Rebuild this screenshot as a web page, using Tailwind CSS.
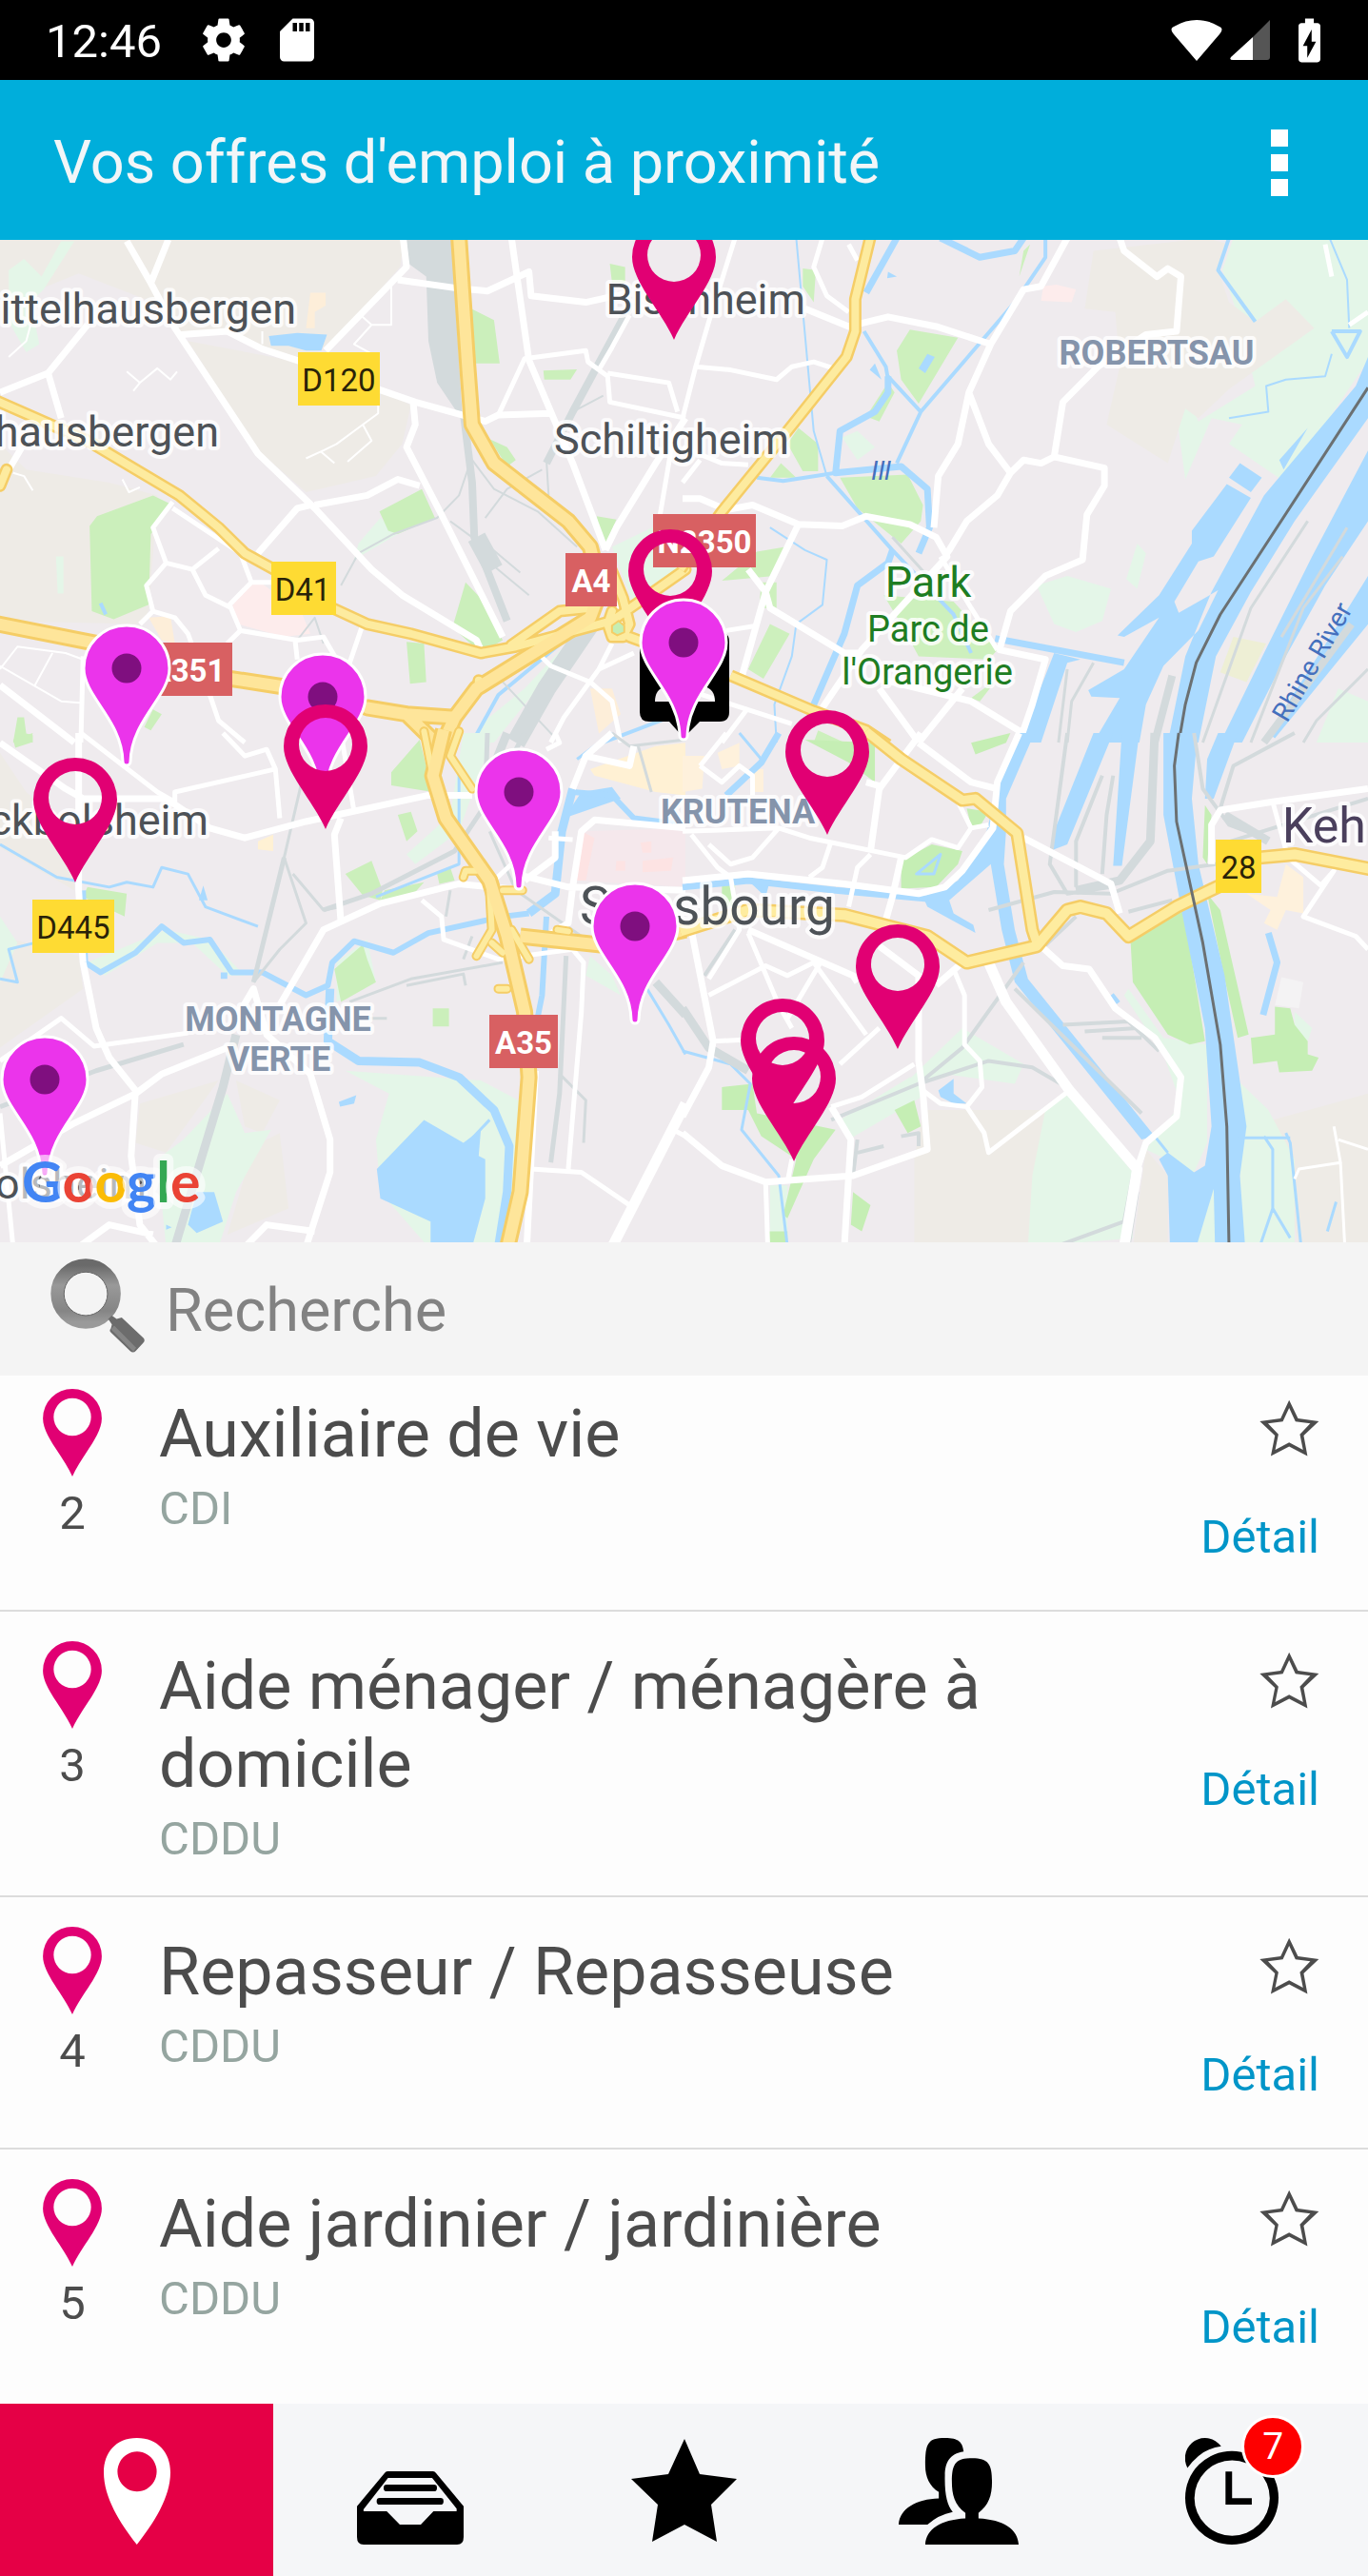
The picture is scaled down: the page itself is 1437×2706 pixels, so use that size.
<!DOCTYPE html>
<html lang="fr">
<head>
<meta charset="utf-8">
<meta name="viewport" content="width=device-width, initial-scale=1">
<title>Vos offres d'emploi à proximité</title>
<script src="https://cdn.jsdelivr.net/npm/@tailwindcss/browser@4"></script>
</head>
<body class="flex min-h-screen flex-col bg-[#fdfdfd] font-['Roboto',sans-serif] text-[#4c4c4c]">

<svg class="hidden" aria-hidden="true">
  <symbol id="pin" viewBox="-44 -131 88 131" overflow="visible">
    <path fill="#e10073" fill-rule="evenodd" d="M0 0C-13 -30 -44 -61 -44 -87A44 44 0 0 1 44 -87C44 -61 13 -30 0 0ZM0 -117A28 28 0 1 0 0 -61A28 28 0 1 0 0 -117Z"/>
  </symbol>
  <symbol id="star" viewBox="558 88 190 180">
    <path fill="#4c4c4c" fill-rule="evenodd" d="M652 90L680 148L746 157L698 202L710 267L652 237L594 267L607 202L559 157L625 148ZM652 115L632 158L585 164L618 198L608 247L652 224L696 247L686 198L719 164L672 158Z"/>
  </symbol>
</svg>

<div class="flex h-[84px] shrink-0 items-center justify-between bg-black pl-[48px] pr-[34px] text-white">
  <div class="flex items-center">
    <span class="pt-[2px] text-[49px] leading-[57px]">12:46</span>
    <svg class="ml-[38px] size-[54px]" viewBox="0 0 24 24" fill="currentColor"><path d="M19.43 12.98c.04-.32.07-.64.07-.98s-.03-.66-.07-.98l2.11-1.65c.19-.15.24-.42.12-.64l-2-3.46c-.12-.22-.39-.3-.61-.22l-2.49 1c-.52-.4-1.08-.73-1.69-.98l-.38-2.65C14.46 2.18 14.25 2 14 2h-4c-.25 0-.46.18-.49.42l-.38 2.65c-.61.25-1.17.59-1.69.98l-2.49-1c-.23-.09-.49 0-.61.22l-2 3.46c-.13.22-.07.49.12.64l2.11 1.65c-.04.32-.07.65-.07.98s.03.66.07.98l-2.11 1.65c-.19.15-.24.42-.12.64l2 3.46c.12.22.39.3.61.22l2.49-1c.52.4 1.08.73 1.69.98l.38 2.65c.03.24.24.42.49.42h4c.25 0 .46-.18.49-.42l.38-2.65c.61-.25 1.17-.59 1.69-.98l2.49 1c.23.09.49 0 .61-.22l2-3.46c.12-.22.07-.49-.12-.64l-2.11-1.65zM12 15.5c-1.93 0-3.5-1.57-3.5-3.5s1.57-3.5 3.5-3.5 3.5 1.57 3.5 3.5-1.57 3.5-3.5 3.5z"/></svg>
    <svg class="ml-[23px] size-[54px]" viewBox="0 0 24 24" fill="currentColor"><path d="M18 2h-8L4.02 8 4 20c0 1.100.9 2 2 2h12c1.100 0 2-.9 2-2V4c0-1.100-.9-2-2-2zm-6 6h-2V4h2v4zm3 0h-2V4h2v4zm3 0h-2V4h2v4z"/></svg>
  </div>
  <div class="flex items-center">
    <svg class="h-[43px] w-[54px]" viewBox="0 0 54 43" fill="currentColor"><path d="M27 43L3 15C-1 10 0 8 5 6C18 -2 36 -2 49 6C54 8 55 10 51 15Z"/></svg>
    <svg class="ml-[8px] h-[42px] w-[42px]" viewBox="0 0 42 42"><path fill="#555" d="M24 18L42 0V39Q42 42 39 42H24Z"/><path fill="#fff" d="M24 18V42H3Q-1 42 1 39Z"/></svg>
    <svg class="ml-[14px] size-[55px]" viewBox="0 0 24 24" fill="currentColor"><path d="M15.670 4H14V2h-4v2H8.330C7.600 4 7 4.600 7 5.330v15.330C7 21.400 7.600 22 8.330 22h7.330c.74 0 1.340-.6 1.340-1.330V5.330C17 4.600 16.400 4 15.670 4zM11 20v-5.500H9L13 7v5.500h2L11 20z"/></svg>
  </div>
</div>

<header class="flex h-[168px] shrink-0 items-center justify-between bg-[#00aedb] pl-[56px] pr-[84px]">
  <h1 class="pt-[5px] text-[63px] leading-[74px] text-[#f2f6f8]">Vos offres d'emploi à proximité</h1>
  <button type="button" aria-label="Plus d'options" class="flex flex-col gap-[8px] pt-[5px]">
    <span class="size-[18px] bg-white"></span><span class="size-[18px] bg-white"></span><span class="size-[18px] bg-white"></span>
  </button>
</header>

<section aria-label="Carte des offres">
<svg class="block h-auto w-full bg-[#efebee]" viewBox="0 252 1437 1053" fill="none" stroke-linejoin="round">

  <!-- north-west -->
  <g transform="translate(0 250) scale(.4592 .338)" class="[&_path]:[vector-effect:non-scaling-stroke]">
    <path fill="#eeebe6" d="M0 0H925L915 90L780 300L700 380L600 340L520 290L400 290L350 200L180 110L90 160L0 260ZM430 320L700 390L870 470L940 520L920 640L860 740L700 790L590 660ZM0 640L60 720L250 760L360 800L340 1160L320 1200L0 1190Z"/>
    <path fill="#e4f6e8" d="M20 100L55 65L95 120L140 10H170L100 160L70 200L90 330L60 355L20 260ZM820 950L870 870L910 920L810 1000ZM128 990H145V1105H132ZM1400 960L1568 850V1020L1450 1140ZM1290 1270L1200 1400L1110 1500L1080 1568H1130L1230 1400Z"/>
    <path fill="#cbefbb" d="M350 800L395 830L345 920L340 1140L260 1185L210 1160L205 895L222 865ZM965 780L995 870L910 920L888 910L868 850ZM1078 220L1130 255L1143 390L1082 390ZM1243 412L1320 408L1305 440H1245ZM1120 625L1160 650L1180 690L1160 710ZM1065 1070L1100 1120L1150 1250L1100 1290L1035 1210ZM930 1255L970 1260L975 1380L938 1385ZM1365 865L1410 875L1380 970ZM350 1465L370 1480L345 1530L330 1520ZM1395 80L1430 90V140H1400ZM40 1490H55L60 1540L75 1545V1568H30Z"/>
    <path fill="#fdecec" d="M560 1080L600 1075L690 1165L710 1230L650 1240L545 1200L528 1150Z"/>
    <path fill="#fdeed9" d="M710 170H745V210L720 230V280H700ZM340 1180L390 1175L400 1260L370 1250ZM1350 1400L1400 1400L1420 1480L1370 1540Z"/>
    <path fill="#aadaff" d="M615 305L680 295L748 300L735 350L700 350L660 335L620 335Z"/>
    <path stroke="#aadaff" stroke-width="4" d="M1568 1470L1380 1568M1300 1240L1140 1420L1080 1568M230 1135L242 1170"/>
    <path fill="#d3dadc" d="M930 5L1035 5L1040 160L1058 560L1040 530L1000 450L980 320L975 120L935 80Z"/>
    <path stroke="#d3dadc" stroke-width="8" d="M1060 540L1080 760L1085 930L1160 1190M1445 200L1310 540L1250 700"/>
    <path stroke="#d3dadc" stroke-width="20" d="M1090 930L1130 1030M1350 1200L1250 1400L1180 1568"/>
    <path stroke="#d3dadc" stroke-width="2" d="M1075 700L1050 800L1000 870L900 920L820 980L780 1080M1250 690L1255 800M1240 720L1160 780L1110 870M1080 690L1130 780L1230 850L1320 960M1030 880L1080 930M1120 960L1190 1040M1130 1020L1210 1110M680 1250L720 1180L740 1260M1150 1380L1280 1568M1310 540L1380 490"/>
    <path stroke="#fff" stroke-width="2" d="M290 415L320 450L360 405L390 440L405 415M320 450L305 475M865 520V545L830 580L770 640L740 660L700 685M830 580L850 630L795 695M735 665L765 700M600 290V330M850 270L810 330L850 360M895 130V270H850L825 240M20 370L60 320L70 270M30 730L55 740L75 785M280 750L295 790L320 775M0 1340L40 1270L150 1290L190 1310M0 1330L140 1440L190 1445M120 1290L80 1390"/>
    <path stroke="#fff" stroke-width="5" d="M395 820L350 900L380 1010L335 1080L350 1160L400 1180L430 1230L480 1420L500 1500L560 1568M395 840L550 980L575 1070L525 1140L550 1220L680 1250L740 1240L770 1310L800 1320L830 1200M500 965L440 1030L380 1010M440 1030L470 1110L530 1150M575 1070H630M675 1250L680 1310M550 1220L520 1260M350 1160L320 1200M185 1568L190 1300M1230 1290L1260 1330L1350 1380L1400 1440L1420 1568M1400 1260L1370 1340L1290 1490L1260 1568M1370 1340L1450 1290M1140 550L1200 375L1340 350L1345 385L1390 430L1395 510L1568 560M1390 420L1530 450L1550 540M1440 240L1400 340L1370 410M1540 620L1510 860"/>
    <path stroke="#fff" stroke-width="7" d="M290 10L345 140L400 280L590 670L720 840L850 1030L920 1110L1090 1250L1100 1280M385 5L345 140M922 0L930 90L745 350M415 300L520 290L600 345L690 385M865 470L950 510L1110 570L1140 550L1260 545M910 130L1040 155M1075 160L1115 165L1210 105L1215 180L1340 200L1440 170M1170 0L1210 380L1310 700L1385 970M200 270L110 420L0 480M110 420L140 560M945 510L950 580L930 650L1010 860L1080 1050L1150 1240M720 830L840 800L910 750L960 770M710 830L680 840L590 980M0 1390L170 1568M1568 560L1500 700L1410 900L1385 970M50 650L20 720M1405 1120L1430 1240"/>
    <path id="nw-small" stroke-linecap="round" d="M-10 505L200 630L410 800L500 900L560 980L640 1040M760 1150L840 1200L940 1230L1100 1290L1180 1270L1400 1190L1568 1030M1350 1150L1280 1160L1170 1265M1395 1020L1425 1120L1440 1200L1425 1240L1400 1240L1390 1200L1400 1160M0 770L15 720M1440 1240L1500 1270M1095 1375V1400"/>
    <path id="nw-big" stroke-linecap="round" d="M-10 1198L220 1260M530 1370L650 1395M840 1460L930 1480M1050 0L1070 400L1080 580L1130 700L1300 880L1350 960L1375 1090L1350 1180L1220 1290L1090 1400L1040 1490L1010 1580M930 1480L990 1560M930 1480L1040 1490"/>
    <use href="#nw-small" stroke="#f5cd66" stroke-width="13"/><use href="#nw-big" stroke="#f5cd66" stroke-width="18"/>
    <use href="#nw-small" stroke="#fdeb9f" stroke-width="8"/><use href="#nw-big" stroke="#fee59a" stroke-width="12"/>
    <path fill="#c5eeb4" stroke="#f5cd66" stroke-width="2" d="M1400 1205L1415 1190L1428 1205V1225L1412 1235L1400 1225Z"/>
  </g>

  <!-- north-east -->
  <g transform="translate(717 250) scale(.4592 .338)" class="[&_path]:[vector-effect:non-scaling-stroke]">
    <path fill="#e4f6e8" d="M1260 0H1568V380L1380 760L1250 640L1280 580L1210 560L1150 750L1130 550L1160 510L1180 570L1310 460L1270 240L1235 100ZM810 1080L880 1050L980 1090L960 1190L900 1225L850 1200ZM1040 950L1060 980L1040 1090L1015 1060ZM365 620L400 600L440 650L400 690ZM1500 1400L1568 1440V1568H1450Z"/>
    <path fill="#eeebe6" d="M940 40L1200 0L1250 20L1225 100L1250 200L1310 260L1380 190L1445 280L1250 470L1180 560L1150 530L1110 700L970 580L1000 400L990 230L920 220Z"/>
    <path fill="#eeefd5" d="M1260 1240L1335 1260L1290 1380L1230 1350Z"/>
    <path fill="#cdf0bd" d="M520 285L630 310L540 515L500 440L490 350ZM360 745L515 735L550 830L545 880L500 950L400 840ZM265 590L310 640L310 725L275 725L240 640ZM275 95L305 100L300 200L275 150ZM170 975L235 960L210 1050L90 1065ZM460 1110L620 1130L720 1280L700 1310L540 1300L500 1200ZM200 1200L245 1230L185 1370L150 1340ZM470 450L485 480L450 570L420 555ZM225 700L260 745L200 745ZM180 1070H215V1150H175ZM310 1530L370 1568H300ZM660 1430L720 1370L680 1440ZM780 40L795 20L770 120Z"/>
    <path fill="#fdecec" d="M825 150L855 145L900 160L890 200L820 195Z"/>
    <path fill="#aadaff" d="M1568 370L1540 460L1330 800L1210 1100L1150 1300L1110 1568H1180L1220 1300L1300 1100L1400 880L1568 560ZM1568 660L1440 990L1330 1290L1230 1568H1280L1380 1300L1470 1080L1568 880ZM1568 1050L1500 1200L1340 1540L1355 1555L1568 1200ZM1245 765L1300 808L1215 990L1180 1005L1125 1130L1135 1165L1225 1095L1180 1220L1100 1330L1060 1450L1045 1568H940L1000 1430L935 1425L928 1405L1010 1340L1090 1180L1010 1240L995 1235L1090 1110L1165 950L1165 910ZM1275 700L1325 745L1300 790L1250 745ZM850 1290L910 1310L880 1320L820 1568H770ZM1430 590L1375 720L1365 690ZM440 390L455 440L428 410ZM470 105L490 120L468 125ZM560 360L577 370L555 420L540 405Z"/>
    <path stroke="#aadaff" stroke-width="2" d="M260 0L300 600L330 740M1480 0L1520 130L1525 280M1250 560L1340 540L1335 460L1380 440L1470 430L1485 360M200 900L280 970L330 1000L320 1140L260 1200L250 1300L210 1450L215 1568"/>
    <path stroke="#aadaff" stroke-width="4" d="M330 740L480 970L620 1170L660 1290M170 745L230 755L350 730M830 0V60L760 200L545 540L490 700M545 540L470 430M1250 0L1225 100L1310 260M1485 290L1520 370L1550 290L1485 290M415 290L465 400L470 440"/>
    <path stroke="#aadaff" stroke-width="7" d="M490 0L420 170M470 430L470 480L440 540L360 600L350 730L500 710L560 780L565 900L540 980M480 970L470 1010L400 1080L370 1230L300 1450M590 0L680 60L760 40L780 0M715 1245L1010 1320"/>
    <path stroke="#d3dadc" stroke-width="3" d="M880 1340L860 1568M940 1320L890 1440L880 1568M1430 880L1300 1150L1190 1568M1510 990L1420 1150L1300 1568M1568 1340L1450 1500L1420 1568M1520 900L1370 1240M480 930L560 1050"/>
    <path stroke="#d3dadc" stroke-width="8" d="M1120 1360L1080 1568M1530 1200L1330 1568"/>
    <path stroke="#fff" stroke-width="5" d="M120 0L60 260L30 400L0 560M320 0L300 90L330 180L380 230M400 70L380 20M30 400L110 410L215 440L250 400L300 385L345 405M0 650L90 700L150 705M100 1220L170 1205M590 990L660 1150L720 1280M0 1400L250 1510M150 1460L90 1568M40 690L0 760M1525 270L1568 230M1470 20L1485 120"/>
    <path stroke="#fff" stroke-width="7" d="M280 220L380 275L470 245L580 275L705 330M880 0L820 150L780 160L705 330L655 480L630 640L585 740L575 900M655 480L700 640L750 730M1000 0L1010 40L1085 120L1110 95L1140 120L1130 290L1060 300L950 400L870 510L850 680L820 700L780 690L750 730L720 800L650 880L610 970L600 990M850 680L965 715L965 770L925 860L915 1000L830 1050L750 1160L725 1280L830 1310L800 1450L770 1568M0 810L40 810L100 845L160 830L265 890L365 895L420 865L520 890L580 930L605 990L410 1280L320 1460M265 890L190 1100L200 1150L370 1290L410 1290M190 1100L130 1390M150 1030L190 1100M450 1400L540 1568M450 1370L660 1440L780 1540M640 1400L540 1568"/>
    <path id="ne-small" d="M430 -5L395 190V290L375 370L240 600L90 850L-5 1030M110 1360L300 1470L420 1530L470 1575"/>
    <use href="#ne-small" stroke="#f5cd66" stroke-width="13"/><use href="#ne-small" stroke="#fdeb9f" stroke-width="8"/>
    <path stroke="#6b7072" stroke-width="3" d="M1568 465L1230 1170L1175 1320L1150 1450L1135 1568"/>
  </g>

  <!-- south-west -->
  <g transform="translate(0 770) scale(.4592 .3444)" class="[&_path]:[vector-effect:non-scaling-stroke]">
    <path fill="#eeebe6" d="M0 60L60 180L170 300V480L0 350ZM0 620L180 680L190 780L0 960ZM320 1130L500 1060L380 1280L310 1250ZM540 1060L640 1120L600 1220L560 1200ZM580 1260L640 1220L660 1450L520 1530Z"/>
    <path fill="#e4f6e8" d="M1060 0H1130L1050 300L950 400L930 370L1030 250ZM790 1030L1100 1060L1200 1130L1180 1568H980L870 1400L860 1240L890 1100ZM420 1240L520 1100L560 1220L620 1210L540 1400L500 1568H380L360 1300ZM380 600L480 630L560 740L520 740L440 640L360 640L240 740L200 700ZM0 560L40 640L0 760ZM770 700L840 630L860 760L770 820ZM1350 680L1400 740L1420 800L1340 740Z"/>
    <path fill="#cbefbb" d="M895 120L960 20L990 180L895 160ZM790 430L850 390L875 480L870 510L830 495ZM765 720L830 645L840 690L860 760L780 820ZM200 470L290 490L285 560L190 500ZM990 840H1027V895H990ZM1000 430L1030 410L1040 450L1005 460ZM30 20L75 0L70 30L35 45ZM910 250L940 240L955 300L930 330ZM880 480L970 455L940 500L870 510Z"/>
    <path fill="#fff1d4" d="M1350 110L1500 40L1568 30V190L1500 180L1360 130ZM590 330L625 310V360L590 355Z"/>
    <path fill="#f5e8ec" d="M1330 300L1568 290V470L1320 450Z"/>
    <path fill="#fde3e3" d="M1330 300L1360 320L1340 450H1310ZM1470 390L1540 380L1535 420L1470 425ZM1410 390H1430V420H1408ZM1465 335L1490 330V365H1470Z"/>
    <path fill="#aadaff" d="M970 1180L1060 1250L1100 1210L1095 1290L1110 1300V1420L1080 1568H985L985 1490L870 1420L862 1330L905 1270ZM450 1400L490 1400L510 1490L450 1525L430 1500ZM775 1125L815 1105L810 1130L778 1140ZM465 465L475 510L455 510ZM505 730H520V750H505ZM380 1500L393 1508L380 1515ZM1330 180L1400 165L1420 200L1290 260Z"/>
    <path stroke="#aadaff" stroke-width="3" d="M0 340L130 440L250 470L290 455L350 470L370 410L430 430L470 530L590 590M1120 1180L1070 1250M1480 780L1530 890L1568 980M0 750L40 760L20 660L80 640M1210 830L1215 1000M860 500L1050 400V120M1400 0L1320 80"/>
    <path stroke="#aadaff" stroke-width="6" d="M190 480L195 700L230 730L310 670L370 590L420 640L480 630L530 730L600 730L700 800L750 770L760 700L810 635L900 670L980 610L1150 560L1210 550M1250 560L1240 800L1210 1000M1310 180L1400 190L1450 260L1568 280"/>
    <path stroke="#aadaff" stroke-width="9" d="M1210 550L1270 490L1285 300L1310 170M755 780L750 940L820 1000L960 1005L1050 1050L1130 1150L1165 1260L1160 1400L1140 1568"/>
    <path stroke="#d3dadc" stroke-width="3" d="M690 150L650 380L700 580L640 660L580 760M800 820L940 750L1150 700M930 770L1060 735L1065 770M1280 1040L1340 1120L1335 1250M1120 300L1180 480L1330 620M670 430L740 540L780 530M1060 690L1080 620M1020 560L1030 480M820 870H885M1400 0L1440 40L1568 20M1460 40L1490 180"/>
    <path stroke="#d3dadc" stroke-width="5" d="M650 380L580 760M1200 0L1130 180L1040 360L850 490L740 540M0 1140L220 1030L420 950M1295 680L1280 1100L1260 1310M1115 0L1110 200"/>
    <path stroke="#d3dadc" stroke-width="9" d="M540 920L510 1080L460 1300L400 1568M1500 760L1568 860M1160 0L1130 100"/>
    <path stroke="#fff" stroke-width="5" d="M185 0L360 180L400 210L400 180L630 110L610 50L560 70L510 0M630 110L640 260M780 0L810 240M965 510L1010 560L1015 630L1140 690L1310 660L1335 700L1330 850L1300 1330M0 1000L140 870L215 955L430 915M0 1160L30 1568M1215 1330L1330 1340L1440 1440M1540 1210L1568 1230M1250 50L1280 30L1270 0M1130 450L1170 400M1255 320L1310 325"/>
    <path stroke="#fff" stroke-width="7" d="M0 30L150 170L190 200L380 200L480 290L560 320L700 270L980 190L1080 190M180 0V480L190 700L220 900L250 990L310 1090L300 1290L320 1500L360 1568M780 260L765 310L780 580M1200 480L1050 460L870 520L740 600L640 830M540 870L580 780L610 920L710 1040L755 1240V1340L700 1568M0 1320L170 1190L310 1100L370 1040L520 960M180 1568L250 1500L350 1530M560 1568L610 1500L720 1520M1225 1030L1205 1568M1180 430L1300 470L1568 480M1270 300V380L1200 450M1568 290L1360 265L1330 300L1310 470L1300 580L1250 620M1310 170L1340 70L1400 0M1340 70L1440 100L1450 40"/>
    <path stroke="#fff" stroke-width="11" d="M1568 1130L1400 1568"/>
    <path id="sw-small" stroke-linecap="round" d="M970 -5L990 130M1050 -5L1030 70L1080 170M1120 480L1125 600L1090 680M1150 480H1195M1170 600L1210 690M1125 640L1150 670M1090 420H1065L1060 440M1160 780H1140M1275 600L1300 605"/>
    <path id="sw-big" d="M1015 -10L990 130L1020 260L1120 450L1160 620L1200 850L1210 1050L1190 1400L1160 1575M1190 620L1400 650L1568 600"/>
    <use href="#sw-small" stroke="#f5cd66" stroke-width="10"/><use href="#sw-big" stroke="#f5cd66" stroke-width="18"/>
    <use href="#sw-small" stroke="#fdeb9f" stroke-width="6"/><use href="#sw-big" stroke="#fee59a" stroke-width="12"/>
  </g>

  <!-- south-east -->
  <g transform="translate(717 770) scale(.4592 .3444)" class="[&_path]:[vector-effect:non-scaling-stroke]">
    <path fill="#eeebe6" d="M550 1150H830L850 1250L800 1400L790 1568H530V1300ZM1350 1180L1568 1100V1568H1410ZM1060 1270L1110 1350V1568H1030Z"/>
    <path fill="#e4f6e8" d="M1020 780L1100 930L1200 950L1200 1250L1170 1340L1060 1270L1140 1130L1100 980L1010 800ZM830 1150L880 1100L1030 1340V1540L790 1568L800 1350ZM1270 1060L1340 1150L1400 1300V1568H1280ZM500 1080L640 900L780 1010L760 1070L600 1040ZM360 1180L520 1050L560 1100L380 1240ZM200 1380H240V1568H200ZM1400 850L1440 900L1430 940L1400 900Z"/>
    <path fill="#c5eeb4" d="M1025 640L1145 530L1195 940L1160 950L1110 920L1030 760ZM1200 490L1230 540L1295 920L1270 930L1240 750ZM500 390L570 340L640 360L630 400L580 470L500 475ZM1355 835L1390 840L1400 890L1430 940L1430 980L1455 990L1440 1030L1365 1035L1360 1000L1305 1010L1300 930L1355 920ZM90 1080L160 1070L170 1160L350 1210L300 1300L240 1480L230 1470L260 1300L180 1230L150 1150L90 1150ZM650 230L700 240L680 285H660ZM485 1150L530 1120L545 1200L515 1220ZM280 20L440 30V150L380 90ZM90 450H120V530H90ZM660 30L750 0L740 30L670 65ZM390 1400L430 1440L410 1520L385 1500ZM195 1520H240V1568H195ZM1195 220L1210 250L1200 400L1190 380Z"/>
    <path fill="#fef1dc" d="M1380 400L1420 440V550L1380 540L1360 600L1330 580L1345 540L1290 490L1360 500ZM0 70L50 70L45 170L0 180ZM80 60L130 30L130 100L90 110ZM160 110H185V180H165Z"/>
    <path fill="#f4f3f4" d="M1370 745L1420 760L1410 840L1355 830Z"/>
    <path fill="#aadaff" d="M1100 0H1178L1165 200L1180 400L1240 740L1290 1200L1275 1350L1287 1568H1115L1110 1350L1090 1300L1110 1280L1170 1340L1195 1320L1210 1200L1195 900L1150 600L1100 250ZM805 0L740 200V300L735 400L760 600L790 750L1080 1230L1050 1240L760 760L730 600L705 400L610 510L620 550L665 585L670 610L560 530L550 500L630 450L690 330L720 170L770 0ZM940 0H985L880 340L840 360L850 300ZM1005 0H1045L1005 405H985ZM1225 0H1270L1215 200H1195L1200 80ZM590 1110L585 1090L620 1055V1100L650 1130H620ZM150 450H200L190 500Z"/>
    <path fill="#e4f6e8" d="M1215 1390L1218 1568H1175Z"/>
    <path stroke="#aadaff" stroke-width="3" d="M0 970L110 1010L155 1070L135 1210L220 1350L240 1568M1330 1230L1350 1270V1450L1320 1568M1350 1450L1390 1540M1380 1220L1390 1250L1415 1568M1270 1235H1390M1495 1430L1475 1520M1080 1230L1110 1280M130 0L180 80M535 430L590 370L575 430Z"/>
    <path stroke="#aadaff" stroke-width="7" d="M0 470L150 450L350 480L560 505M1340 610L1360 700L1328 860M100 190L180 90L220 0M980 800L995 825"/>
    <path stroke="#d3dadc" stroke-width="4" d="M780 700L640 960L540 1070L340 1180M540 1070L700 1000L800 1020L890 1090M700 540L850 485L980 490L1110 420L1220 400M980 470L880 490L840 400L880 0M870 890L1020 880L1090 970M920 910L1040 900M960 930H1050M760 780L1050 1160M400 1280L460 1260M390 1350L400 1240M500 1230L540 1220L540 1260M1030 1350L1010 1490L850 1568M1170 0L1190 170L1250 280L1330 320M820 660L900 560M1020 545L1120 510M50 740L120 600M960 130L900 330L900 470M985 130L970 250L960 430M1400 0L1260 100L1230 230M1230 340L1568 200M1040 1400L1020 1568"/>
    <path stroke="#d3dadc" stroke-width="9" d="M1080 0L1070 330L1000 450L900 480M0 840L60 960L150 1030M1240 250L1340 330"/>
    <path stroke="#fff" stroke-width="5" d="M0 300L220 290L290 320L510 380L570 325L630 350L660 290L700 280M630 210L660 290M220 290L160 380L110 400L60 340M20 310L80 410L110 440L130 600L60 750M340 330L320 410L290 440M430 370L400 410L380 530M60 800L190 710L240 740L300 700L420 920M150 610L220 830L250 900M320 690L240 870M70 940L150 935M450 900L360 1010M340 1140L410 1110L530 1010M250 1300L240 1370M190 1370L195 1568M620 720L645 800V950L680 1000L685 1080L650 1140L590 1130L550 1090M650 1140L690 1220L700 1280L885 1090M1350 210L1385 380L1460 465L1490 420L1420 560L1540 620L1568 660M40 100L90 150L130 100L160 130V190M40 100L100 0"/>
    <path stroke="#fff" stroke-width="3" d="M1490 1200L1505 1310L1410 1330L1400 1360M1500 1240L1568 1270M1505 1310L1515 1568"/>
    <path stroke="#fff" stroke-width="7" d="M0 450L150 430L370 460L540 490L600 470L640 420L710 290L720 150L770 0M540 30L660 150L720 170M780 320L980 460L1000 550M545 0L450 170L430 360M420 150L460 165M500 380L480 500L465 570M150 600L390 740L400 760M580 770L640 700M20 600L70 940L60 1020L0 1170M450 650L540 740V1000L550 1100L560 1270L390 1350L190 1370L90 1320L0 1220M340 1140L385 1240L370 1568M820 650L870 710L930 720L990 840L1080 930L1140 1050L1130 1170L1060 1250L1040 1330M1568 170L1350 210L1230 235L1210 280V400"/>
    <path stroke="#fff" stroke-width="11" d="M700 700L740 820L885 1090L1040 1330L1010 1568"/>
    <path id="se-small" d="M420 -5L500 80L640 205L670 200L765 305L800 600L810 640"/>
    <path id="se-big" d="M-5 605L150 540L370 555L560 620L650 700L810 650L880 540L910 530L970 550L1020 620L1130 530L1230 465M1320 380L1400 370L1575 415"/>
    <use href="#se-small" stroke="#f5cd66" stroke-width="14"/><use href="#se-big" stroke="#f5cd66" stroke-width="15"/>
    <use href="#se-small" stroke="#fdeb9f" stroke-width="9"/><use href="#se-big" stroke="#feec9f" stroke-width="10"/>
    <path stroke="#6b7072" stroke-width="3" d="M1135 0L1125 100L1130 270L1190 640L1230 950L1245 1200L1250 1568"/>
  </g>

  <!-- place names -->
  <g class="fill-[#4d5257] stroke-white/80 stroke-[8px] text-[45px] [paint-order:stroke]" text-anchor="end">
    <text x="311" y="340">ittelhausbergen</text>
    <text x="230" y="469">hausbergen</text>
    <text x="846" y="330">Bischheim</text>
    <text x="829" y="477">Schiltigheim</text>
    <text x="219" y="877">ckbolsheim</text>
    <text x="154" y="1259">olsheim</text>
    <text x="877" y="971" class="text-[55px]">Strasbourg</text>
    <text x="1435" y="885" class="fill-[#4a3f5c] text-[52px]">Keh</text>
  </g>
  <g class="fill-[#8594ab] stroke-white/80 stroke-[8px] text-[36px] font-bold [paint-order:stroke]" text-anchor="middle">
    <text x="1215" y="383">ROBERTSAU</text>
    <text x="775" y="865">KRUTENA</text>
    <text x="292" y="1083">MONTAGNE</text>
    <text x="293" y="1125">VERTE</text>
  </g>
  <g class="fill-[#1e7d22] stroke-white/80 stroke-[8px] text-[38px] [paint-order:stroke]" text-anchor="middle">
    <text x="975" y="627" class="text-[45px]">Park</text>
    <text x="975" y="674">Parc de</text>
    <text x="974" y="719">l'Orangerie</text>
  </g>
  <g class="fill-[#4570bd] text-[28px]">
    <text x="915" y="504" class="italic">Ill</text>
    <text transform="translate(1352 760) rotate(-60)">Rhine River</text>
  </g>

  <!-- road shields -->
  <g fill="#fedb33"><path d="M313 370H399V426H313ZM285 590H353V646H285ZM34 945H120V1001H34ZM1277 882H1325V938H1277Z"/></g>
  <g fill="#d86062"><path d="M594 581H648V637H594ZM686 540H794V596H686ZM152 675H244V731H152ZM514 1066H586V1122H514Z"/></g>
  <g class="fill-[#2a2308] text-[33px]" text-anchor="middle">
    <text x="356" y="411">D120</text><text x="318" y="631">D41</text><text x="77" y="986">D445</text><text x="1301" y="923">28</text>
  </g>
  <g class="fill-white text-[33px] font-bold" text-anchor="middle">
    <text x="621" y="622">A4</text><text x="740" y="581">N2350</text><text x="197" y="716">A351</text><text x="550" y="1107">A35</text>
  </g>

  <!-- current position -->
  <path fill="#000" fill-rule="evenodd" d="M682 664H756Q766 664 766 674V748Q766 758 756 758H735L718 775L703 758H682Q672 758 672 748V674Q672 664 682 664ZM688 737H751Q751 724 740 721H699Q688 724 688 737Z"/>

  <!-- offers -->
  <defs>
    <g id="spot">
      <path fill="#eb34eb" stroke="#fff" stroke-width="3" d="M-45 0A45 45 0 0 1 45 0C45 30 5 54 4 98A4 4 0 0 1 -4 98C-5 54 -45 30 -45 0Z"/>
      <circle r="15.500" fill="#7f0f7f"/>
    </g>
  </defs>
  <use href="#spot" x="133" y="702"/>
  <use href="#spot" x="339" y="732"/>
  <use href="#pin" x="35" y="796" width="88" height="131"/>
  <use href="#pin" x="298" y="740" width="88" height="131"/>
  <use href="#pin" x="664" y="226" width="88" height="131"/>
  <use href="#pin" x="660" y="556" width="88" height="131"/>
  <use href="#spot" x="718" y="675"/>
  <use href="#spot" x="545" y="832"/>
  <use href="#spot" x="667" y="973"/>
  <use href="#spot" x="47" y="1134"/>
  <use href="#pin" x="825" y="746" width="88" height="131"/>
  <use href="#pin" x="899" y="971" width="88" height="131"/>
  <use href="#pin" x="778" y="1049" width="88" height="131"/>
  <use href="#pin" x="790" y="1089" width="88" height="131"/>

  <!-- map provider -->
  <text x="23" y="1263" class="stroke-white/60 stroke-[14px] font-['Lato',sans-serif] text-[59px] font-bold [paint-order:stroke]"><tspan class="fill-[#4285f4]">G</tspan><tspan class="fill-[#ea4335]">o</tspan><tspan class="fill-[#fbbc05]">o</tspan><tspan class="fill-[#4285f4]">g</tspan><tspan class="fill-[#34a853]">l</tspan><tspan class="fill-[#ea4335]">e</tspan></text>
</svg>
</section>

<label class="flex h-[140px] shrink-0 items-center gap-[21px] bg-[#f4f4f4] pl-[53px] pr-[50px]">
  <svg class="mb-[6px] size-[100px] shrink-0" viewBox="160 425 302 302">
    <defs><linearGradient id="metal" x1="0" y1="0" x2="0" y2="1"><stop offset="0" stop-color="#6a6a6a"/><stop offset=".35" stop-color="#999"/><stop offset=".8" stop-color="#858585"/><stop offset="1" stop-color="#9a9a9a"/></linearGradient></defs>
    <circle cx="272" cy="537" r="90" fill="none" stroke="url(#metal)" stroke-width="42"/>
    <circle cx="272" cy="537" r="69" fill="none" stroke="#666" stroke-width="3"/>
    <path fill="#6c6c6c" d="M343 617L355 606L370 617L386 612L455 677Q462 685 454 693L431 718Q422 727 413 719L352 660Q345 654 352 646L355 634Z"/>
    <path fill="#858585" d="M352 650L362 638L432 708L423 720Z"/>
  </svg>
  <input type="search" placeholder="Recherche" aria-label="Recherche" class="h-[74px] min-w-0 flex-1 bg-transparent pt-1 text-[63px] leading-[74px] outline-none placeholder:text-[#828282]">
</label>

<ul class="flex-1 text-[49px] leading-[57px]">
  <li class="flex min-h-[248px] items-start border-b-[2px] border-[#dcdcdc] pt-[14px] pb-[31px] pl-[45px] pr-[51px]">
    <div class="flex w-[62px] shrink-0 flex-col items-center gap-[10px]"><svg class="h-[92px] w-[62px]"><use href="#pin"/></svg><span>2</span></div>
    <div class="ml-[60px] flex flex-1 flex-col gap-[9px] pt-[6px]"><h2 class="text-[70px] leading-[82px]">Auxiliaire de vie</h2><p class="text-[#95a5a0]">CDI</p></div>
    <div class="ml-[24px] flex flex-col items-end gap-[56px] pt-[11px]"><button type="button" aria-label="Ajouter aux favoris"><svg class="h-[60px] w-[63px]"><use href="#star"/></svg></button><a href="#offre-2" class="text-[#0095c8]">Détail</a></div>
  </li>
  <li class="flex min-h-[265px] items-start border-b-[2px] border-[#dcdcdc] pt-[31px] pb-[31px] pl-[45px] pr-[51px]">
    <div class="flex w-[62px] shrink-0 flex-col items-center gap-[10px]"><svg class="h-[92px] w-[62px]"><use href="#pin"/></svg><span>3</span></div>
    <div class="ml-[60px] flex flex-1 flex-col gap-[9px] pt-[6px]"><h2 class="text-[70px] leading-[82px]">Aide ménager / ménagère à domicile</h2><p class="text-[#95a5a0]">CDDU</p></div>
    <div class="ml-[24px] flex flex-col items-end gap-[56px] pt-[11px]"><button type="button" aria-label="Ajouter aux favoris"><svg class="h-[60px] w-[63px]"><use href="#star"/></svg></button><a href="#offre-3" class="text-[#0095c8]">Détail</a></div>
  </li>
  <li class="flex min-h-[265px] items-start border-b-[2px] border-[#dcdcdc] pt-[31px] pb-[31px] pl-[45px] pr-[51px]">
    <div class="flex w-[62px] shrink-0 flex-col items-center gap-[10px]"><svg class="h-[92px] w-[62px]"><use href="#pin"/></svg><span>4</span></div>
    <div class="ml-[60px] flex flex-1 flex-col gap-[9px] pt-[6px]"><h2 class="text-[70px] leading-[82px]">Repasseur / Repasseuse</h2><p class="text-[#95a5a0]">CDDU</p></div>
    <div class="ml-[24px] flex flex-col items-end gap-[56px] pt-[11px]"><button type="button" aria-label="Ajouter aux favoris"><svg class="h-[60px] w-[63px]"><use href="#star"/></svg></button><a href="#offre-4" class="text-[#0095c8]">Détail</a></div>
  </li>
  <li class="flex min-h-[264px] items-start pt-[31px] pb-[31px] pl-[45px] pr-[51px]">
    <div class="flex w-[62px] shrink-0 flex-col items-center gap-[10px]"><svg class="h-[92px] w-[62px]"><use href="#pin"/></svg><span>5</span></div>
    <div class="ml-[60px] flex flex-1 flex-col gap-[9px] pt-[6px]"><h2 class="text-[70px] leading-[82px]">Aide jardinier / jardinière</h2><p class="text-[#95a5a0]">CDDU</p></div>
    <div class="ml-[24px] flex flex-col items-end gap-[56px] pt-[11px]"><button type="button" aria-label="Ajouter aux favoris"><svg class="h-[60px] w-[63px]"><use href="#star"/></svg></button><a href="#offre-5" class="text-[#0095c8]">Détail</a></div>
  </li>
</ul>

<nav class="grid h-[181px] shrink-0 grid-cols-5 bg-[#f5f6f8] text-black">
  <a href="#carte" aria-label="Carte" aria-current="page" class="flex items-end justify-center bg-[#e50046] pb-[33px] text-white">
    <svg class="h-[112px] w-[70px]" viewBox="235 182 153 337" preserveAspectRatio="none" fill="currentColor"><path fill-rule="evenodd" d="M311 182C360 182 388 230 388 290C388 370 350 450 311 519C272 450 235 370 235 290C235 230 262 182 311 182ZM311 225A45 63 0 1 0 312 225Z"/></svg>
  </a>
  <a href="#boite" aria-label="Boîte de réception" class="flex items-end justify-center pb-[33px]">
    <svg class="h-[77px] w-[112px]" viewBox="817 288 244 231" preserveAspectRatio="none" fill="currentColor"><path fill-rule="evenodd" d="M887 288H991Q995 288 998 294L1061 398V495Q1061 519 1046 519H832Q817 519 817 495V398L880 294Q883 288 887 288ZM888 309L832 408V414H885L915 456H963L992 414H1045V406L989 309Z"/><rect x="878" y="330" width="122" height="21" rx="7" ry="10"/><rect x="862" y="372" width="153" height="21" rx="7" ry="10"/></svg>
  </a>
  <a href="#favoris" aria-label="Favoris" class="flex items-end justify-center pb-[33px]">
    <svg class="h-[112px] w-[111px]" viewBox="663 2561 111 112" fill="currentColor"><path d="M719 2562L735 2599L774 2604L747 2631L753 2670L719 2652L685 2670L691 2631L663 2604L702 2599Z"/></svg>
  </a>
  <a href="#contacts" aria-label="Contacts" class="flex items-end justify-center pb-[33px] pl-[2px]">
    <svg class="h-[112px] w-[126px]" viewBox="494 182 275 337" preserveAspectRatio="none" fill="currentColor"><path d="M600 182C632 182 640 195 643 225C610 232 600 262 600 300C599 360 605 395 618 416Q585 425 560 456H494C496 405 535 375 586 373V353C565 335 555 305 555 270C555 200 560 182 600 182Z"/><path d="M662 246C700 246 708 265 708 320C708 365 700 395 677 419V436C735 440 767 470 769 519H555C557 470 590 440 647 436V419C622 395 616 360 616 320C616 265 624 246 662 246Z"/></svg>
  </a>
  <a href="#alertes" aria-label="Alertes" class="flex items-end justify-center pb-[33px] pl-[2px]">
    <span class="relative">
      <svg class="block h-[112px] w-[98px]" viewBox="1152 182 213 337" preserveAspectRatio="none" fill="currentColor"><path d="M1157 277C1140 230 1165 182 1197 182Q1218 182 1234 208Q1190 215 1157 277Z"/><path fill-rule="evenodd" d="M1152 371A106 147 0 0 1 1365 371A106 147 0 0 1 1152 371ZM1173 372A86 119 0 0 0 1345 372A86 119 0 0 0 1173 372Z"/><path d="M1244 288H1259V372H1304V393H1244Z"/></svg>
      <span class="absolute -top-[24px] left-[59px] flex size-[66px] items-center justify-center rounded-full border-[3px] border-white bg-[#fe0000] text-[39px] leading-none text-white">7</span>
    </span>
  </a>
</nav>
</body>
</html>
